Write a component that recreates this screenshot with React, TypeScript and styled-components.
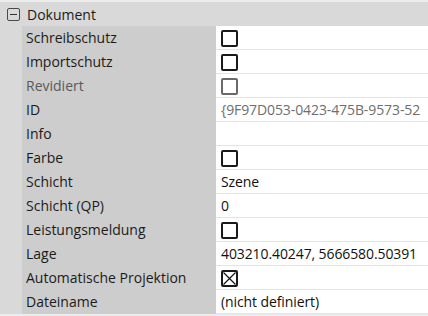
import React from 'react'
import styled, {createGlobalStyle} from 'styled-components'

const GlobalStyle = createGlobalStyle`
    html, body {
        margin: 0;
        padding: 0;
        background: #ececec;
    }
    body {
        font-family: "Open Sans", "Noto Sans", sans-serif;
        font-size: 14px;
        color: #1b1b1b;
    }
`

const Panel = styled.div`
    width: 428px;
    padding: 2px 0;
    overflow: hidden;
`

const Header = styled.div`
    display: flex;
    align-items: center;
    height: 24px;
    background: #d9d9d9;
    padding-left: 7px;
    gap: 7px;
`

const Toggle = styled.span`
    box-sizing: border-box;
    width: 13px;
    height: 13px;
    border: 1px solid #4a4a4a;
    border-radius: 2px;
    display: flex;
    align-items: center;
    justify-content: center;

    &::after {
        content: '';
        width: 7px;
        height: 1px;
        background: #333;
    }
`

const Grid = styled.div`
    display: grid;
    grid-template-columns: 22px 194px 1fr;
    background: #d9d9d9;
`

const Label = styled.div<{$muted?: boolean}>`
    grid-column: 2;
    height: 24px;
    line-height: 24px;
    background: #cdcdcd;
    padding-left: 4px;
    white-space: nowrap;
    color: ${props => props.$muted ? '#5a5a5a' : '#1b1b1b'};
`

const Value = styled.div<{$muted?: boolean}>`
    grid-column: 3;
    box-sizing: border-box;
    height: 24px;
    line-height: 23px;
    background: #fff;
    border-bottom: 1px solid #e3e3e3;
    padding-left: 5px;
    display: flex;
    align-items: center;
    white-space: nowrap;
    overflow: hidden;
    letter-spacing: -0.1px;
    color: ${props => props.$muted ? '#6e6e6e' : '#111'};
`

const Box = styled.span<{$disabled?: boolean}>`
    box-sizing: border-box;
    width: 17px;
    height: 17px;
    border: 2px solid ${props => props.$disabled ? '#6a6a6a' : '#1a1a1a'};
    border-radius: 2px;
    display: flex;
    align-items: center;
    justify-content: center;
    margin-top: 1px;
`

const CheckBox = ({checked, disabled}: {checked?: boolean, disabled?: boolean}) => (
    <Box $disabled={disabled}>
        {checked &&
        <svg width="13" height="13" viewBox="0 0 13 13">
            <path d="M0.5 0.5 L12.5 12.5 M12.5 0.5 L0.5 12.5" stroke="#111" strokeWidth="1.2"/>
        </svg>
        }
    </Box>
)

type Row = {
    label: string
    value?: string
    check?: 'off' | 'on' | 'disabled'
    mutedLabel?: boolean
    mutedValue?: boolean
}

const rows: Row[] = [
    {label: 'Schreibschutz', check: 'off'},
    {label: 'Importschutz', check: 'off'},
    {label: 'Revidiert', check: 'disabled', mutedLabel: true},
    {label: 'ID', value: '{9F97D053-0423-475B-9573-52', mutedValue: true},
    {label: 'Info', value: ''},
    {label: 'Farbe', check: 'off'},
    {label: 'Schicht', value: 'Szene'},
    {label: 'Schicht (QP)', value: '0'},
    {label: 'Leistungsmeldung', check: 'off'},
    {label: 'Lage', value: '403210.40247, 5666580.50391'},
    {label: 'Automatische Projektion', check: 'on'},
    {label: 'Dateiname', value: '(nicht definiert)'},
]

const App = () => {
    return (
        <>
            <GlobalStyle/>
            <Panel>
                <Header>
                    <Toggle/>
                    <span>Dokument</span>
                </Header>
                <Grid>
                    {rows.map(row => (
                        <React.Fragment key={row.label}>
                            <Label $muted={row.mutedLabel}>{row.label}</Label>
                            <Value $muted={row.mutedValue}>
                                {row.check
                                    ? <CheckBox checked={row.check === 'on'} disabled={row.check === 'disabled'}/>
                                    : row.value}
                            </Value>
                        </React.Fragment>
                    ))}
                </Grid>
            </Panel>
        </>
    )
}

export default App
